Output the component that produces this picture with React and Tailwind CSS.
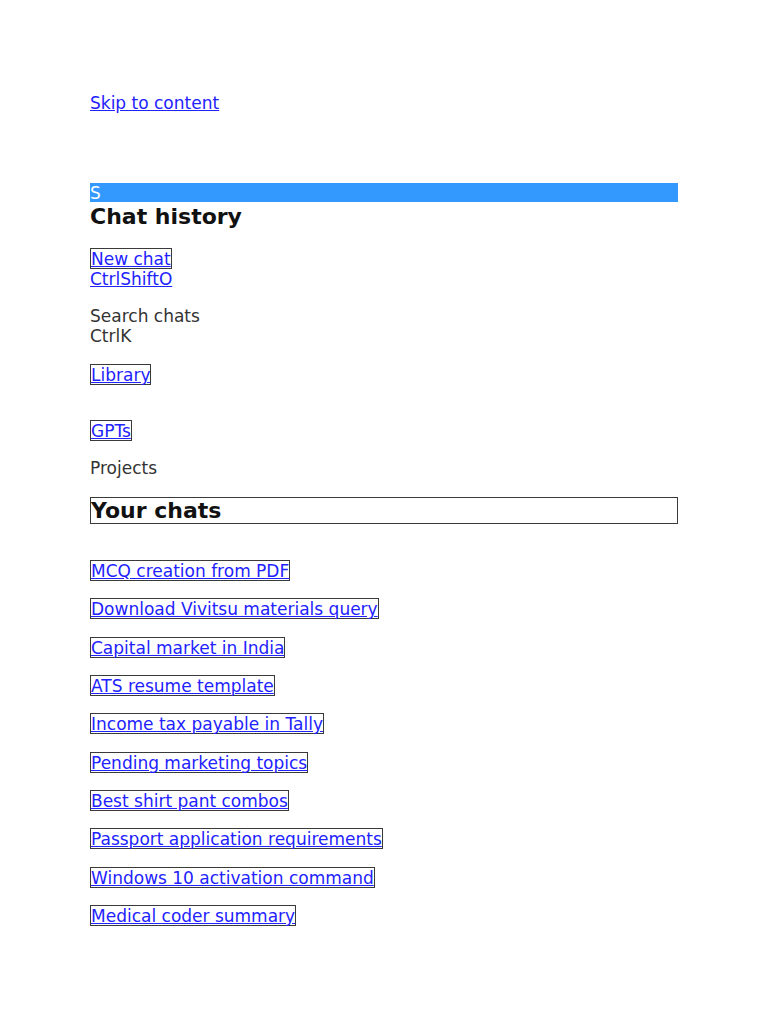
import React from "react";

const chats = [
  "MCQ creation from PDF",
  "Download Vivitsu materials query",
  "Capital market in India",
  "ATS resume template",
  "Income tax payable in Tally",
  "Pending marketing topics",
  "Best shirt pant combos",
  "Passport application requirements",
  "Windows 10 activation command",
  "Medical coder summary",
];

const BoxLink = ({ children }) => (
  <a href="#" className="block h-[21px] w-fit border border-[#3a3a3a] leading-[21px] text-[#2222ff] underline">
    {children}
  </a>
);

const App = () => {
  return (
    <div className="min-h-[1024px] bg-white px-[90px] pt-[93px] font-['DejaVu_Sans',sans-serif] text-[17px] leading-[20px] text-[#333]">
      <div className="w-[588px]">
        <a href="#" className="block w-fit text-[#2222ff] underline">Skip to content</a>

        <div className="mt-[70px] h-[19px] bg-[#3399ff] pt-[1px] leading-[19px] text-white">S</div>

        <h2 className="mt-[2px] text-[22px] font-bold leading-[26px] text-[#111]">Chat history</h2>

        <div className="mt-[18px]">
          <BoxLink>New chat</BoxLink>
          <a href="#" className="block w-fit text-[#2222ff] underline">CtrlShiftO</a>
        </div>

        <div className="mt-[17px]">
          <div>Search chats</div>
          <div>CtrlK</div>
        </div>

        <div className="mt-[18px]">
          <BoxLink>Library</BoxLink>
        </div>

        <div className="mt-[35px]">
          <BoxLink>GPTs</BoxLink>
        </div>

        <div className="mt-[17px]">Projects</div>

        <h2 className="mt-[19px] border border-[#3a3a3a] text-[22px] font-bold leading-[25px] text-[#111]">Your chats</h2>

        <ul className="mt-[36px] flex flex-col gap-[17.33px]">
          {chats.map((c) => (
            <li key={c}>
              <BoxLink>{c}</BoxLink>
            </li>
          ))}
        </ul>
      </div>
    </div>
  );
};

export default App;
